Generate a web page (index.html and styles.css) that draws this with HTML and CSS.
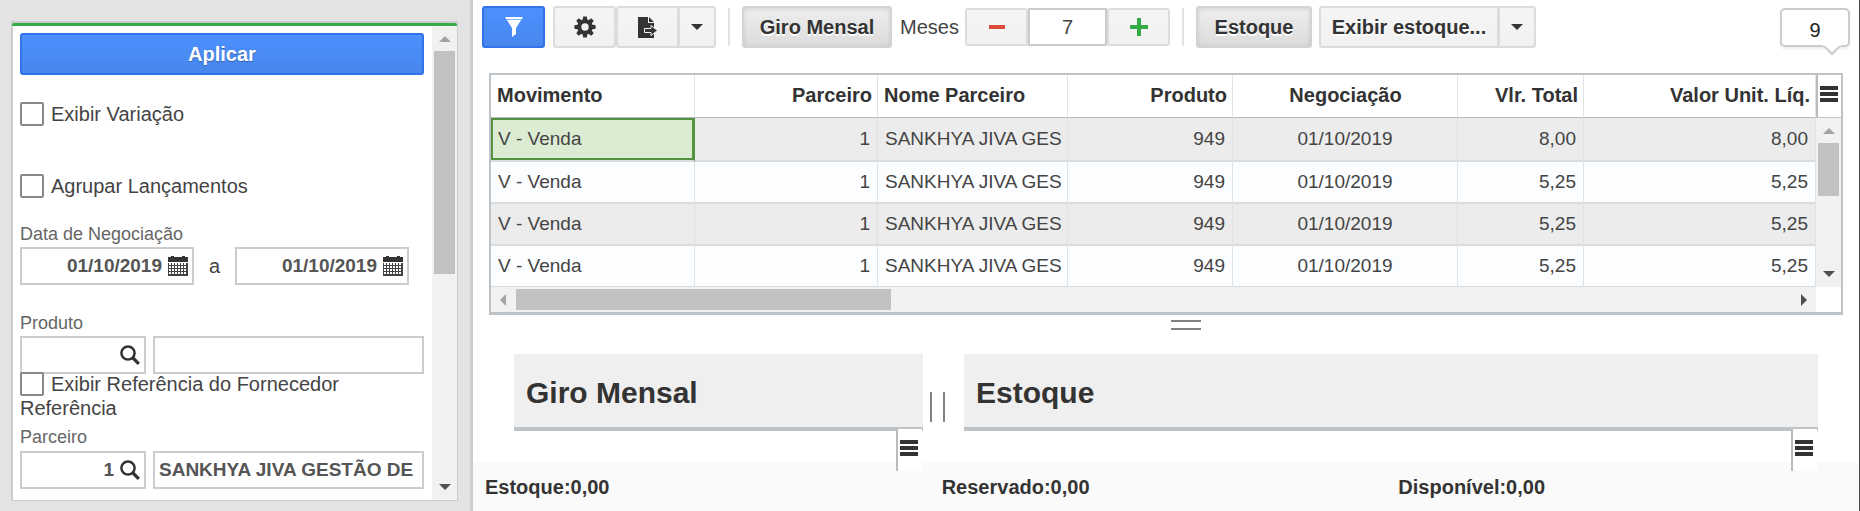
FILE: index.html
```html
<!DOCTYPE html>
<html lang="pt-BR">
<head>
<meta charset="utf-8">
<title>Giro de Estoque</title>
<link rel="stylesheet" href="styles.css">
</head>
<body>
<svg class="defs" aria-hidden="true">
  <symbol id="calendar" viewBox="0 0 20 20">
    <path fill="#333" d="M0 1h3V0h3v1h8V0h3v1h3v5H0z"/>
    <path fill="#444" d="M0 7h20v13H0z"/>
    <path stroke="#fff" stroke-width="2" stroke-dasharray="2 1" d="M1 8h18M1 11h18M1 14h18M1 17h18"/>
  </symbol>
  <symbol id="search" viewBox="0 0 20 20">
    <circle cx="8" cy="8" r="6.600" fill="none" stroke="#333" stroke-width="2.500"/>
    <path d="M13 13l5.800 5.800" stroke="#333" stroke-width="3.200"/>
  </symbol>
  <symbol id="bars" viewBox="0 0 18 16">
    <path fill="#333" d="M0 0h18v4H0zM0 6h18v4H0zM0 12h18v4H0z"/>
  </symbol>
  <symbol id="caret" viewBox="0 0 12 6"><path fill="currentColor" d="M0 0h12L6 6z"/></symbol>
</svg>
<div class="app">
  <aside class="side">
    <div class="panel">
      <form class="filters">
        <button type="button" class="apply">Aplicar</button>
        <label class="check"><input type="checkbox">Exibir Variação</label>
        <label class="check check-second"><input type="checkbox">Agrupar Lançamentos</label>
        <label class="caption caption-date" for="d1">Data de Negociação</label>
        <div class="row dates">
          <span class="field"><input id="d1" type="text" class="num" value="01/10/2019"><button type="button" class="pick" aria-label="Calendário"><svg><use href="#calendar"/></svg></button></span>
          <label for="d2">a</label>
          <span class="field"><input id="d2" type="text" class="num" value="01/10/2019"><button type="button" class="pick" aria-label="Calendário"><svg><use href="#calendar"/></svg></button></span>
        </div>
        <label class="caption caption-product" for="prod">Produto</label>
        <div class="row">
          <span class="field code"><input id="prod" type="text" class="num"><button type="button" class="pick" aria-label="Pesquisar"><svg><use href="#search"/></svg></button></span>
          <span class="field name"><input type="text" aria-label="Descrição do produto"></span>
        </div>
        <label class="check check-ref"><input type="checkbox">Exibir Referência do Fornecedor</label>
        <div class="ref">Referência</div>
        <label class="caption caption-partner" for="parc">Parceiro</label>
        <div class="row">
          <span class="field code"><input id="parc" type="text" class="num" value="1"><button type="button" class="pick" aria-label="Pesquisar"><svg><use href="#search"/></svg></button></span>
          <span class="field name"><input type="text" aria-label="Nome do parceiro" value="SANKHYA JIVA GESTÃO DE"></span>
        </div>
      </form>
      <div class="vbar side-bar">
        <svg class="arrow up"><use href="#caret"/></svg>
        <div class="thumb"></div>
        <svg class="arrow down"><use href="#caret"/></svg>
      </div>
    </div>
  </aside>
  <main class="main">
    <header class="toolbar">
      <button type="button" class="btn primary" aria-label="Filtro"><svg width="20" height="22" viewBox="0 0 20 22"><path fill="#fff" d="M1 1h18l-7 11v6l-4 3v-9z"/><path d="M3 3.500h14" stroke="#8db6fa"/></svg></button>
      <div class="group">
        <button type="button" class="btn" aria-label="Configurações"><svg width="22" height="22" viewBox="-11 -11 22 22"><g fill="#333"><path id="tooth" d="M-2.500-6l.7-4.600h3.600l.7 4.600z"/><use href="#tooth" transform="rotate(45)"/><use href="#tooth" transform="rotate(90)"/><use href="#tooth" transform="rotate(135)"/><use href="#tooth" transform="rotate(180)"/><use href="#tooth" transform="rotate(225)"/><use href="#tooth" transform="rotate(270)"/><use href="#tooth" transform="rotate(315)"/></g><circle r="5.700" fill="none" stroke="#333" stroke-width="4"/></svg></button>
        <button type="button" class="btn export" aria-label="Exportar"><svg width="20" height="22" viewBox="0 0 20 22"><path fill="#333" d="M0 1h10v6h6v15H0z"/><path fill="#333" d="M11 1l5 5h-5z"/><path fill="#333" stroke="#f3f3f3" d="M6.500 12.500h6.500v-3l6.500 5-6.500 5v-3H6.500z"/></svg></button>
        <button type="button" class="btn drop" aria-label="Mais opções"><svg width="12" height="6"><use href="#caret"/></svg></button>
      </div>
      <span class="sep"></span>
      <button type="button" class="btn pressed giro">Giro Mensal</button>
      <label class="months" for="months">Meses</label>
      <div class="stepper">
        <button type="button" class="btn" aria-label="Menos"><svg width="18" height="18"><path d="M1 9h16" stroke="#dd4b39" stroke-width="4"/></svg></button>
        <input id="months" type="text" value="7">
        <button type="button" class="btn" aria-label="Mais"><svg width="18" height="18"><path d="M0 9h18M9 0v18" stroke="#35aa47" stroke-width="4"/></svg></button>
      </div>
      <span class="sep"></span>
      <button type="button" class="btn pressed stock">Estoque</button>
      <div class="group show">
        <button type="button" class="btn show-main">Exibir estoque...</button>
        <button type="button" class="btn drop" aria-label="Opções de estoque"><svg width="12" height="6"><use href="#caret"/></svg></button>
      </div>
      <div class="bubble">9<svg width="20" height="11" viewBox="0 0 20 11"><path d="M1 0l9 9 9-9" fill="#fff" stroke="#ccc" stroke-width="2"/><path d="M1 0h18" stroke="#fff" stroke-width="2"/></svg></div>
    </header>

    <section class="grid">
      <div class="grid-body">
        <table>
          <colgroup><col class="c1"><col class="c2"><col class="c3"><col class="c4"><col class="c5"><col class="c6"><col></colgroup>
          <thead><tr><th>Movimento</th><th class="r">Parceiro</th><th>Nome Parceiro</th><th class="r">Produto</th><th class="c">Negociação</th><th class="r">Vlr. Total</th><th class="r">Valor Unit. Líq.</th></tr></thead>
          <tbody>
            <tr><td class="selected">V - Venda</td><td class="r">1</td><td class="partner">SANKHYA JIVA GES</td><td class="r">949</td><td class="c">01/10/2019</td><td class="r">8,00</td><td class="r">8,00</td></tr>
            <tr><td>V - Venda</td><td class="r">1</td><td class="partner">SANKHYA JIVA GES</td><td class="r">949</td><td class="c">01/10/2019</td><td class="r">5,25</td><td class="r">5,25</td></tr>
            <tr><td>V - Venda</td><td class="r">1</td><td class="partner">SANKHYA JIVA GES</td><td class="r">949</td><td class="c">01/10/2019</td><td class="r">5,25</td><td class="r">5,25</td></tr>
            <tr><td>V - Venda</td><td class="r">1</td><td class="partner">SANKHYA JIVA GES</td><td class="r">949</td><td class="c">01/10/2019</td><td class="r">5,25</td><td class="r">5,25</td></tr>
          </tbody>
        </table>
        <div class="grid-side">
          <button type="button" class="menu grid-menu" aria-label="Colunas"><svg><use href="#bars"/></svg></button>
          <div class="vbar">
            <svg class="arrow up"><use href="#caret"/></svg>
            <div class="thumb"></div>
            <svg class="arrow down"><use href="#caret"/></svg>
          </div>
        </div>
      </div>
      <div class="hbar">
        <svg width="6" height="12"><path fill="#a3a3a3" d="M6 0v12L0 6z"/></svg>
        <div class="thumb"></div>
        <svg width="6" height="12"><path fill="#505050" d="M0 0v12l6-6z"/></svg>
      </div>
    </section>

    <div class="hsplit"></div>

    <div class="cards">
      <section class="card"><h2>Giro Mensal</h2><button type="button" class="menu card-menu" aria-label="Colunas de giro"><svg><use href="#bars"/></svg></button></section>
      <div class="vsplit"></div>
      <section class="card"><h2>Estoque</h2><button type="button" class="menu card-menu" aria-label="Colunas de estoque"><svg><use href="#bars"/></svg></button></section>
    </div>

    <footer class="totals"><span>Estoque:0,00</span><span>Reservado:0,00</span><span>Disponível:0,00</span></footer>
  </main>
</div>
</body>
</html>
```
FILE: styles.css
```css
* { box-sizing: border-box; }
body {
  margin: 0;
  font-family: "Liberation Sans", Arial, sans-serif;
  font-size: 20px;
  line-height: 24px;
  color: #444;
  background: #fff;
}
button, input { font: inherit; color: inherit; margin: 0; }
button { cursor: pointer; }
svg { display: block; flex: none; }
.defs { display: none; }
.app { display: flex; min-height: 100vh; }

/* filter panel */
.side {
  flex: none;
  width: 473px;
  padding: 21px 12px 10px 11px;
  background: #e3e3e3;
  border-right: 3px solid #ccc;
  display: flex;
}
.panel {
  flex: 1;
  display: flex;
  background: #fff;
  border: 2px solid #ccc;
  border-right-width: 1px;
  border-bottom-width: 1px;
  position: relative;
}
.panel::before {
  content: "";
  position: absolute;
  top: 0;
  left: -1px;
  right: 0;
  height: 3px;
  background: #35aa47;
  border-radius: 2px 2px 0 0;
}
.filters { flex: 1; min-width: 0; padding: 10px 8px 10px 7px; display: flex; flex-direction: column; }
.apply {
  height: 42px;
  padding: 0;
  border: 2px solid #2f74eb;
  border-radius: 3px;
  background: linear-gradient(#4d90fe, #4787ed);
  color: #fff;
  font-weight: bold;
  text-shadow: 0 1px 1px rgba(0, 0, 0, .3);
}
.check { display: flex; align-items: center; gap: 7px; margin-top: 27px; }
.check input {
  appearance: none;
  width: 24px;
  height: 24px;
  border: 2px solid #888;
  border-radius: 2px;
  background: #fff;
}
.check-second { margin-top: 48px; }
.check-ref { margin-top: -2px; position: relative; }
.caption { font-size: 18px; color: #666; line-height: 24px; margin: 4px 0 2px; }
.caption-date { margin-top: 24px; margin-bottom: 1px; }
.caption-product { margin-top: 26px; margin-bottom: 1px; }
.caption-partner { margin-top: 5px; }
.row { display: flex; gap: 7px; }
.dates { gap: 0; align-items: center; }
.dates label { width: 41px; text-align: center; }
.field {
  display: flex;
  align-items: center;
  height: 38px;
  border: 2px solid #ccc;
  padding: 0 4px;
  background: #fff;
}
.dates .field { width: 174px; }
.code { width: 126px; }
.name { flex: 1; min-width: 0; }
.field input {
  flex: 1;
  min-width: 0;
  width: 0;
  border: 0;
  padding: 0;
  outline: 0;
  background: none;
  color: #555;
  font-size: 19px;
  font-weight: bold;
}
.num { text-align: right; }
.pick { border: 0; background: none; padding: 0; margin-left: 6px; }
.pick svg { width: 20px; height: 20px; }

/* scroll bars */
.vbar {
  width: 25px;
  background: #f1f1f1;
  display: flex;
  flex-direction: column;
  align-items: center;
  padding: 10px 2px;
}
.vbar .arrow { width: 12px; height: 6px; color: #505050; }
.vbar .up { transform: rotate(180deg); color: #a3a3a3; }
.vbar .down { margin-top: auto; }
.thumb { background: #c1c1c1; }
.vbar .thumb { width: 21px; height: 53px; margin-top: 9px; }
.side-bar { padding-top: 13px; }
.side-bar .thumb { height: 223px; }
.hbar { display: flex; align-items: center; height: 25px; margin-right: 25px; padding: 0 9px; background: #f1f1f1; }
.hbar .thumb { height: 21px; width: 375px; margin-left: 10px; margin-right: auto; }

/* main area */
.main { flex: 1; min-width: 0; display: flex; flex-direction: column; border-right: 1px solid #444; }
.toolbar { display: flex; align-items: center; height: 54px; padding: 0 9px 0 9px; }
.group { display: flex; margin-left: 8px; }
.btn {
  height: 42px;
  min-width: 63px;
  padding: 0;
  display: flex;
  align-items: center;
  justify-content: center;
  border: 2px solid #dcdcdc;
  border-radius: 3px;
  background: linear-gradient(#f5f5f5, #f1f1f1);
  color: #333;
  font-weight: bold;
  text-shadow: 0 2px 0 #fff;
}
.primary { border-color: #2f74eb; background: linear-gradient(#4d90fe, #4787ed); }
.export { border-radius: 3px 0 0 3px; }
.drop { min-width: 0; width: 38px; margin-left: -1px; border-radius: 0 3px 3px 0; }
.sep { width: 2px; height: 38px; margin: 0 12px; background: #e3e3e3; }
.pressed { background: linear-gradient(#eee, #dcdcdc); border-color: #d3d3d3; box-shadow: inset 0 1px 4px rgba(0, 0, 0, .12); }
.giro { width: 150px; }
.months { width: 73px; padding-left: 8px; }
.stepper { display: flex; }
.stepper .btn { height: 38px; }
.stepper input {
  width: 79px;
  height: 38px;
  padding: 0;
  border: 2px solid #ccc;
  text-align: center;
  background: #fff;
}
.stock { width: 116px; }
.show { margin-left: 7px; }
.show-main { width: 180px; border-radius: 3px 0 0 3px; }
.bubble {
  position: relative;
  margin-left: auto;
  width: 70px;
  height: 39px;
  border: 2px solid #ccc;
  border-radius: 5px;
  text-align: center;
  line-height: 41px;
  color: #222;
  background: #fff;
  box-shadow: 0 2px 3px rgba(0, 0, 0, .08);
}
.bubble svg { position: absolute; right: 6px; top: 35px; }

/* movements grid */
.grid { margin: 19px 16px 0; border: 2px solid #bdc3c7; border-bottom-width: 3px; }
.grid-body { display: flex; }
.grid-side { display: flex; flex-direction: column; width: 25px; }
.grid-side .vbar { flex: 1; }
.menu { border: 0; background: #fff; padding: 0; display: flex; align-items: center; }
.menu svg { width: 18px; height: 16px; }
.grid-menu { height: 43px; border-left: 2px solid #bbb; border-bottom: 1px solid #bdc3c7; padding: 0 2px 4px; }
table { flex: 1; min-width: 0; width: 0; table-layout: fixed; border-collapse: separate; border-spacing: 0; }
.c1 { width: 204px; }
.c2 { width: 183px; }
.c3 { width: 190px; }
.c4 { width: 165px; }
.c5 { width: 225px; }
.c6 { width: 126px; }
th, td { text-align: left; white-space: nowrap; overflow: hidden; border-right: 1px solid #dfe3e6; }
th { height: 43px; padding: 0 5px 2px 6px; border-bottom: 1px solid #b5b9bc; color: #333; }
td { height: 42px; padding: 0 7px; border-bottom: 2px solid #d9dcdf; font-size: 19px; }
td.partner { padding-right: 0; }
tbody tr:nth-child(odd) { background: #ececec; }
tbody tr:nth-child(even) { background: #fcfdff; }
tbody tr:first-child td { height: 44px; }
tbody tr:last-child td { height: 41px; border-bottom-width: 1px; }
td.selected { background: #dcecd2; box-shadow: inset 0 0 0 2px #529240; border-right-color: #529240; }
.r { text-align: right; }
.c { text-align: center; }

/* split handles */
.hsplit { width: 30px; height: 10px; margin: 5px auto 24px; border: solid #808080; border-width: 2px 0; transform: translateX(20px); }
.vsplit { width: 15px; height: 30px; margin: 38px 0 0 7px; border: solid #808080; border-width: 0 2px; }

/* lower cards */
.cards { display: grid; grid-template-columns: 409fr 41px 854fr; margin: 0 41px; height: 108px; }
.card { position: relative; }
.card h2 {
  margin: 0;
  height: 77px;
  padding: 0 12px;
  font-size: 30px;
  line-height: 78px;
  color: #333;
  background: #efefef;
  border-bottom: 4px solid #bdc3c7;
}
.card-menu { position: absolute; top: 75px; right: 1px; width: 26px; height: 42px; border-left: 2px solid #bbb; padding: 0 2px 5px; }

.totals {
  flex: 1;
  display: grid;
  grid-template-columns: repeat(3, 1fr);
  align-items: center;
  padding: 0 4px 0 12px;
  background: #fafafa;
  color: #333;
  font-weight: bold;
}
```
